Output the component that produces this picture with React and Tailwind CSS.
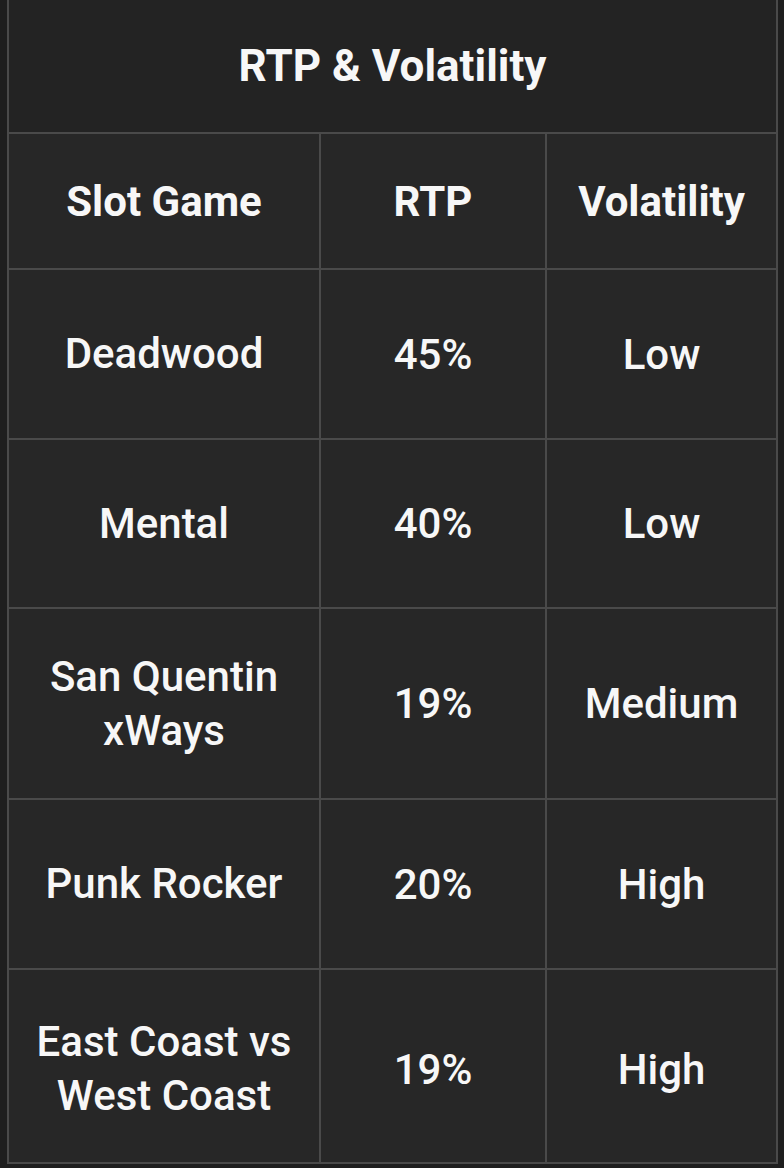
const rows = [
  { game: ['Deadwood'], rtp: '45%', vol: 'Low', h: 'h-[168px]' },
  { game: ['Mental'], rtp: '40%', vol: 'Low', h: 'h-[167px]' },
  { game: ['San Quentin', 'xWays'], rtp: '19%', vol: 'Medium', h: 'h-[189px]' },
  { game: ['Punk Rocker'], rtp: '20%', vol: 'High', h: 'h-[168px]' },
  { game: ['East Coast vs', 'West Coast'], rtp: '19%', vol: 'High', h: 'h-[192px] pt-[6px]' },
];

function Cell({ children, className = '' }) {
  return (
    <div className={`flex items-center justify-center text-center bg-[#272727] ${className}`}>
      {children}
    </div>
  );
}

export default function App() {
  return (
    <div
      className="h-[1168px] w-[784px] bg-[#1e1e1e] pl-[7px] text-[#f7f7f7]"
      style={{ fontFamily: 'Roboto, "Noto Sans", sans-serif' }}
    >
      <div className="w-[771px] border-x-2 border-b-2 border-[#4a4a4a] bg-[#4a4a4a]">
        <div className="flex h-[132px] items-center justify-center bg-[#232323] text-[44px] font-bold">
          RTP &amp; Volatility
        </div>
        <div className="mt-[2px] grid grid-cols-[310px_224px_229px] gap-[2px]">
          <Cell className="h-[134px] bg-[#232323] text-[42px] font-bold">Slot Game</Cell>
          <Cell className="h-[134px] bg-[#232323] text-[42px] font-bold">RTP</Cell>
          <Cell className="h-[134px] bg-[#232323] text-[42px] font-bold">Volatility</Cell>
          {rows.map((r) => (
            <>
              <Cell key={r.game[0] + 'g'} className={`${r.h} text-[42px] font-medium leading-[54px]`}>
                <div>
                  {r.game.map((line) => (
                    <div key={line}>{line}</div>
                  ))}
                </div>
              </Cell>
              <Cell key={r.game[0] + 'r'} className={`${r.h} text-[42px] font-medium`}>{r.rtp}</Cell>
              <Cell key={r.game[0] + 'v'} className={`${r.h} text-[42px] font-medium`}>{r.vol}</Cell>
            </>
          ))}
        </div>
      </div>
    </div>
  );
}
